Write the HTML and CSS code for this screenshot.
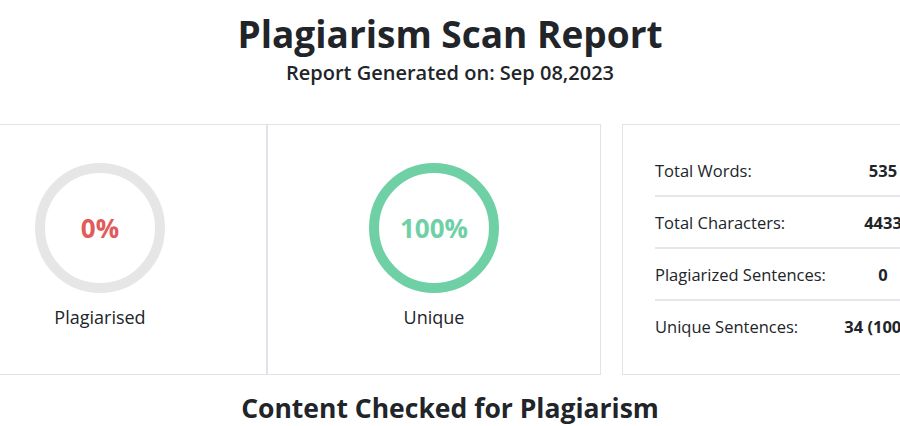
FILE: index.html
```html
<!DOCTYPE html>
<html lang="en">
<head>
    <meta charset="UTF-8">
    <meta name="viewport" content="width=device-width, initial-scale=1.0">
    <title>Plagiarism Scan Report</title>
    <link rel="stylesheet" href="styles.css">
</head>
<body>

<div class="report">
    <div class="report-head">
        <h1>Plagiarism Scan Report</h1>
        <p class="report-date">Report Generated on: Sep 08,2023</p>
    </div>

    <div class="summary">
        <div class="card score-card">
            <div class="ring ring-plag">0%</div>
            <div class="ring-label">Plagiarised</div>
        </div>
        <div class="card score-card">
            <div class="ring ring-unique">100%</div>
            <div class="ring-label">Unique</div>
        </div>
        <div class="card stats-card">
            <div class="stat-row">
                <span class="stat-name">Total Words:</span>
                <span class="stat-value">535</span>
            </div>
            <div class="stat-row">
                <span class="stat-name">Total Characters:</span>
                <span class="stat-value">4433</span>
            </div>
            <div class="stat-row">
                <span class="stat-name">Plagiarized Sentences:</span>
                <span class="stat-value">0</span>
            </div>
            <div class="stat-row">
                <span class="stat-name">Unique Sentences:</span>
                <span class="stat-value">34 (100%)</span>
            </div>
        </div>
    </div>

    <h2 class="content-title">Content Checked for Plagiarism</h2>
</div>

</body>
</html>
```

FILE: styles.css
```css
body {
    font-family: "Open Sans", Arial, sans-serif;
    color: #212529;
    background: #fff;
    margin: 0;
    overflow: hidden;
}
.report-head {
    text-align: center;
    padding-top: 10px;
}
h1 {
    font-size: 37px;
    font-weight: 700;
    line-height: 48px;
    margin: 0;
}
.report-date {
    font-size: 20px;
    font-weight: 600;
    line-height: 26px;
    margin: 2px 0 0;
}
.summary {
    display: flex;
    justify-content: center;
    margin-top: 38px;
}
.card {
    flex: none;
    box-sizing: border-box;
    height: 251px;
    border: 1px solid #dfe3ea;
    background: #fff;
}
.score-card {
    width: 334px;
    display: flex;
    flex-direction: column;
    align-items: center;
    padding-top: 38px;
}
.ring {
    box-sizing: border-box;
    width: 130px;
    height: 130px;
    border-radius: 50%;
    border: 10px solid #e6e6e6;
    display: flex;
    align-items: center;
    justify-content: center;
    font-size: 26px;
    font-weight: 700;
}
.ring-plag {
    color: #e25a5a;
}
.ring-unique {
    border-color: #6fd0a6;
    color: #6fd0a6;
}
.ring-label {
    margin-top: 12px;
    font-size: 18px;
    line-height: 24px;
}
.stats-card {
    width: 345px;
    margin-left: 21px;
    padding: 20px 32px 0;
}
.stat-row {
    display: flex;
    align-items: center;
    height: 50px;
    border-bottom: 2px solid #e3e6ea;
    font-size: 16.5px;
}
.stat-row:last-child {
    border-bottom: none;
}
.stat-name {
    width: 178px;
    flex: none;
}
.stat-value {
    width: 100px;
    text-align: center;
    font-weight: 700;
    white-space: nowrap;
}
.content-title {
    text-align: center;
    font-size: 26.5px;
    font-weight: 700;
    line-height: 36px;
    margin: 15px 0 0;
}
```
